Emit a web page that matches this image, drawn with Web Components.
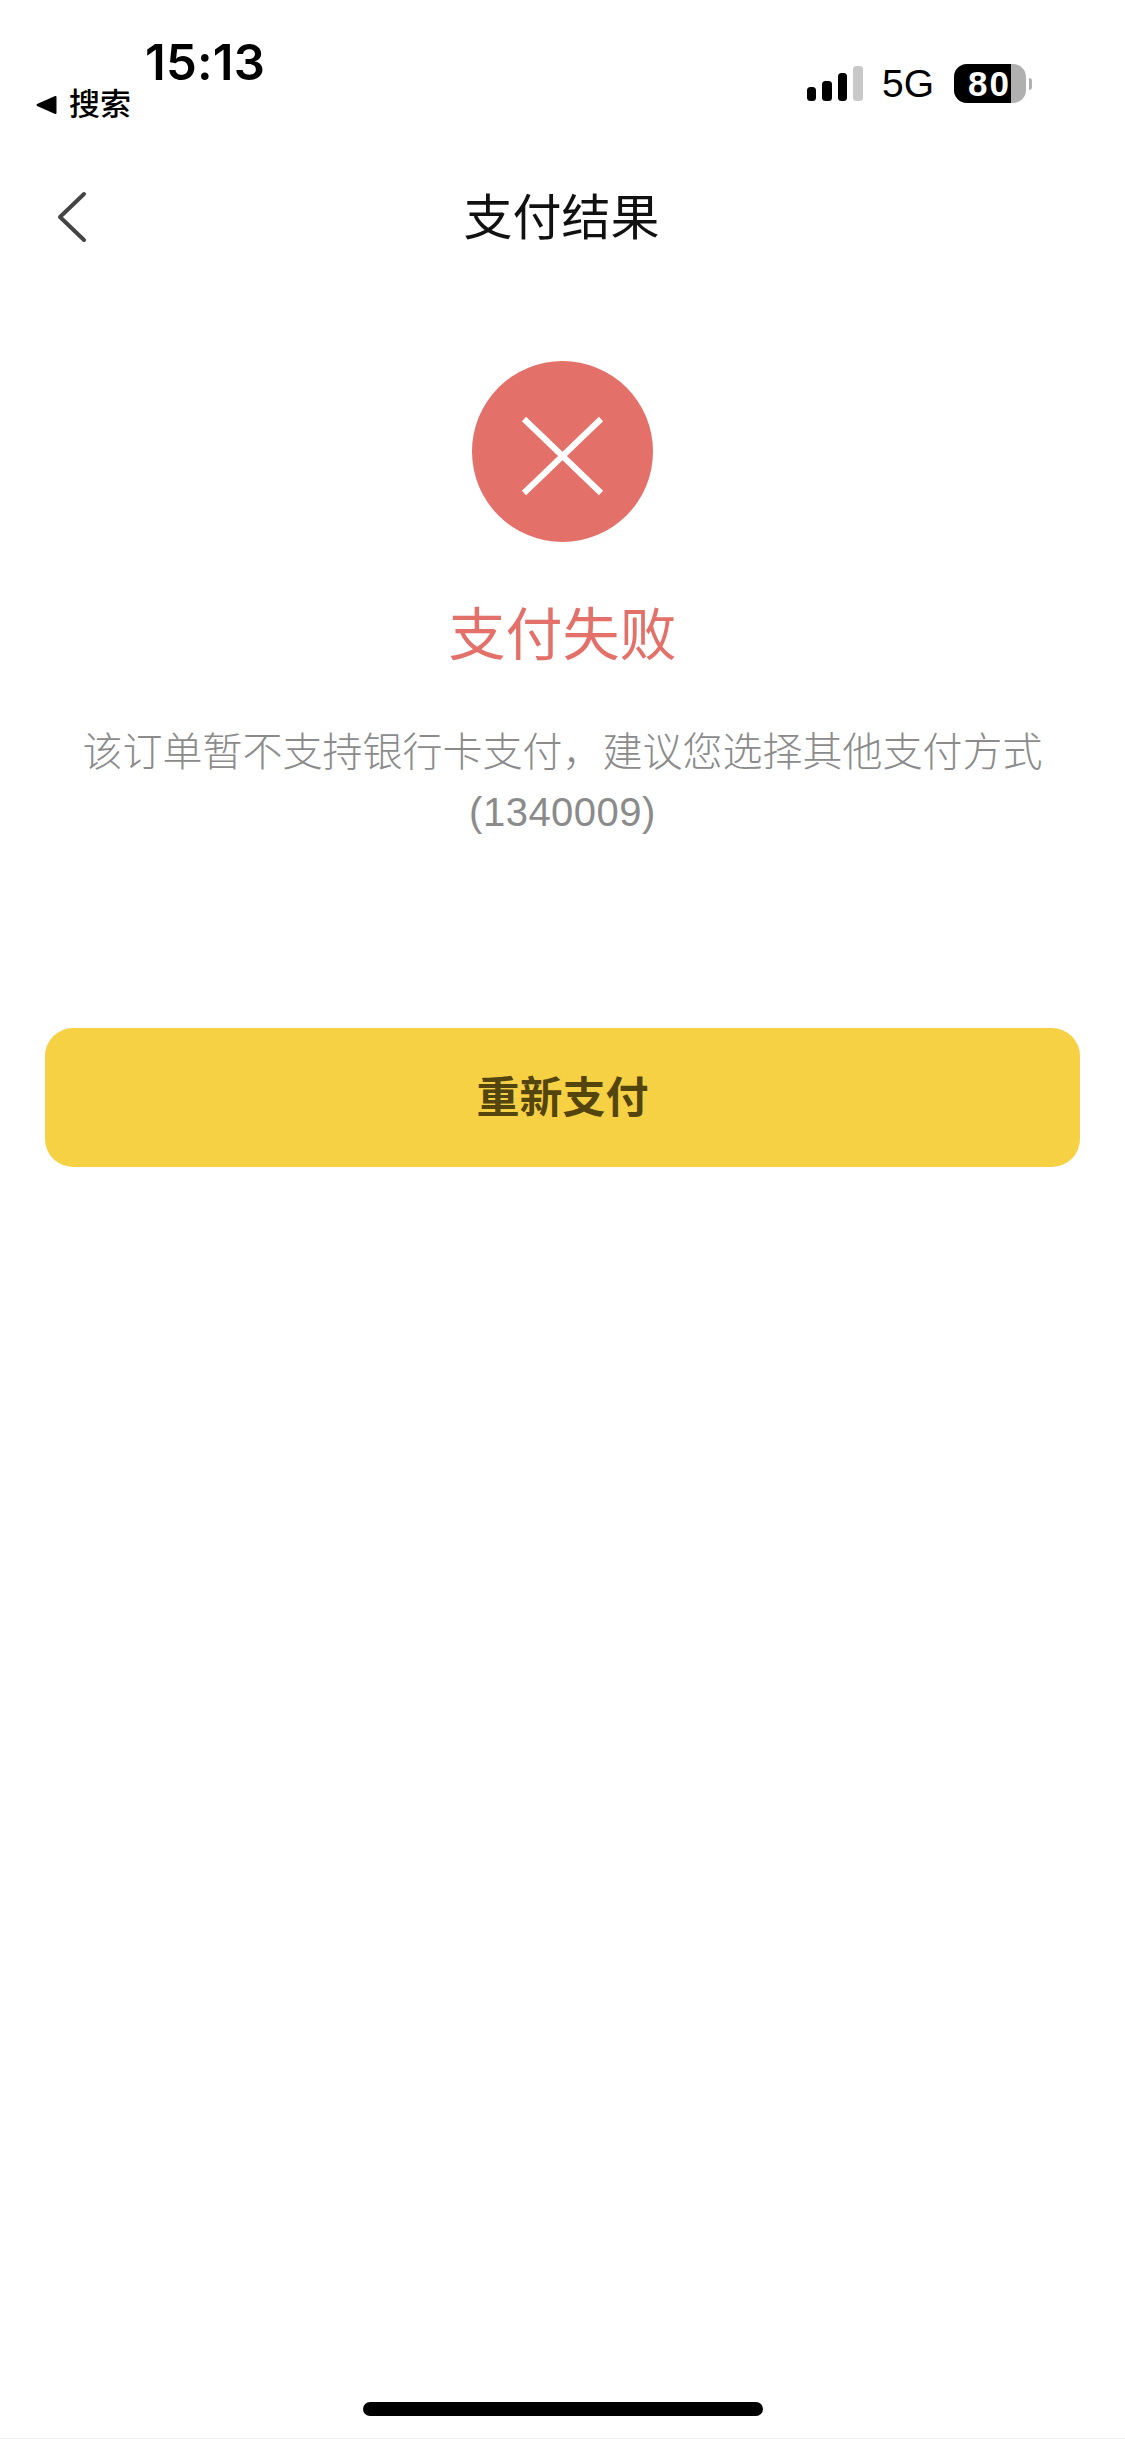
<!DOCTYPE html>
<html lang="zh">
<head>
<meta charset="utf-8">
<title>支付结果</title>
<style>
    html, body { margin: 0; padding: 0; background: #fff; }
    body {
        width: 1125px;
        height: 2439px;
        display: flex;
        flex-direction: column;
        overflow: hidden;
        font-family: "Liberation Sans", "Noto Sans CJK SC", sans-serif;
    }
</style>
</head>
<body>
<status-bar time="15:13" back="搜索" network="5G" battery="80"></status-bar>
<nav-bar>支付结果</nav-bar>
<pay-result heading="支付失败" code="(1340009)">该订单暂不支持银行卡支付，建议您选择其他支付方式</pay-result>
<action-button>重新支付</action-button>
<home-indicator></home-indicator>

<script>
class StatusBar extends HTMLElement {
    connectedCallback() {
        this.attachShadow({ mode: 'open' });
        this.shadowRoot.innerHTML = `
            <style>
                :host {
                    display: flex;
                    justify-content: space-between;
                    align-items: flex-start;
                    height: 138px;
                    padding: 38px 93px 0 36px;
                    box-sizing: border-box;
                    color: #000;
                }
                .left { display: flex; flex-direction: column; }
                .time {
                    margin-left: 109px;
                    font: 600 49px/49px Inter, "Liberation Sans", sans-serif;
                    letter-spacing: 0.2px;
                }
                .back {
                    display: flex;
                    align-items: center;
                    gap: 12px;
                    font-size: 31px;
                    line-height: 36px;
                    font-weight: 500;
                }
                .back svg { display: block; }
                .right { display: flex; align-items: flex-start; padding-top: 26px; }
                .signal { display: flex; align-items: flex-end; gap: 6px; height: 35px; padding-top: 2px; }
                .signal i { display: block; width: 9.5px; border-radius: 3.5px; background: #000; }
                .signal i:last-child { background: #c8c8c8; }
                .net {
                    margin-left: 19px;
                    font: 400 39px/39px "Liberation Sans", sans-serif;
                }
                .battery { display: flex; align-items: center; margin-left: 20px; }
                .cell {
                    display: flex;
                    width: 72px;
                    height: 39px;
                    border-radius: 13px;
                    overflow: hidden;
                    background: #b0b0b0;
                }
                .fill {
                    width: 57px;
                    background: #000;
                    color: #fff;
                    font: 700 35px/39px "Liberation Sans", sans-serif;
                    letter-spacing: 2px;
                    text-align: right;
                    box-sizing: border-box;
                }
                .nub {
                    width: 3px;
                    height: 12px;
                    margin-left: 3px;
                    border-radius: 0 3px 3px 0;
                    background: #b0b0b0;
                }
            </style>
            <div class="left">
                <div class="time">${this.getAttribute('time')}</div>
                <div class="back">
                    <svg width="21" height="20" viewBox="0 0 21 20"><path d="M1.5 10 19.5 2V18Z" fill="#000" stroke="#000" stroke-width="2" stroke-linejoin="round"/></svg>
                    <span>${this.getAttribute('back')}</span>
                </div>
            </div>
            <div class="right">
                <div class="signal">
                    <i style="height:14px"></i><i style="height:20px"></i><i style="height:28px"></i><i style="height:35px"></i>
                </div>
                <div class="net">${this.getAttribute('network')}</div>
                <div class="battery">
                    <div class="cell"><div class="fill">${this.getAttribute('battery')}</div></div>
                    <div class="nub"></div>
                </div>
            </div>
        `;
    }
}

class NavBar extends HTMLElement {
    connectedCallback() {
        this.attachShadow({ mode: 'open' });
        this.shadowRoot.innerHTML = `
            <style>
                :host {
                    display: grid;
                    grid-template-columns: 1fr auto 1fr;
                    align-items: center;
                    height: 156px;
                    color: #111;
                    font-size: 49px;
                }
                .back { padding-left: 56px; display: flex; }
                .title { padding: 0 2px 6px 0; }
            </style>
            <div class="back">
                <svg width="32" height="54" viewBox="0 0 32 54"><path d="M28 5 4 28 28 51" fill="none" stroke="#444" stroke-width="4" stroke-linecap="round" stroke-linejoin="round"/></svg>
            </div>
            <div class="title"><slot></slot></div>
            <div></div>
        `;
    }
}

class PayResult extends HTMLElement {
    connectedCallback() {
        this.attachShadow({ mode: 'open' });
        this.shadowRoot.innerHTML = `
            <style>
                :host {
                    display: flex;
                    flex-direction: column;
                    align-items: center;
                    padding-top: 67px;
                    text-align: center;
                }
                .mark { width: 181px; height: 181px; display: block; }
                h2 {
                    margin: 54px 0 0;
                    color: #e4706a;
                    font-size: 57px;
                    line-height: 78px;
                    font-weight: 400;
                }
                .desc {
                    margin-top: 48px;
                    color: #8b8b8b;
                    font-size: 40px;
                    line-height: 60px;
                    font-weight: 300;
                }
                .code { letter-spacing: 0.5px; }
            </style>
            <svg class="mark" viewBox="0 0 181 181">
                <circle cx="90.5" cy="90.5" r="90.5" fill="#e4706a"/>
                <path d="M52 58 129 132M129 58 52 132" fill="none" stroke="#fff" stroke-width="6"/>
            </svg>
            <h2>${this.getAttribute('heading')}</h2>
            <div class="desc"><slot></slot><br><span class="code">${this.getAttribute('code')}</span></div>
        `;
    }
}

class ActionButton extends HTMLElement {
    connectedCallback() {
        this.attachShadow({ mode: 'open' });
        this.shadowRoot.innerHTML = `
            <style>
                :host {
                    display: flex;
                    align-items: center;
                    justify-content: center;
                    height: 139px;
                    box-sizing: border-box;
                    padding-bottom: 8px;
                    margin: 186px 45px 0;
                    border-radius: 28px;
                    background: #f7d144;
                    color: #54440d;
                    font-size: 43px;
                    font-weight: 700;
                }
            </style>
            <slot></slot>
        `;
    }
}

class HomeIndicator extends HTMLElement {
    connectedCallback() {
        this.attachShadow({ mode: 'open' });
        this.shadowRoot.innerHTML = `
            <style>
                :host {
                    display: flex;
                    justify-content: center;
                    margin-top: auto;
                    padding-bottom: 22px;
                    border-bottom: 1px solid #f2f2f2;
                }
                div { width: 400px; height: 14px; border-radius: 7px; background: #000; }
            </style>
            <div></div>
        `;
    }
}

customElements.define('status-bar', StatusBar);
customElements.define('nav-bar', NavBar);
customElements.define('pay-result', PayResult);
customElements.define('action-button', ActionButton);
customElements.define('home-indicator', HomeIndicator);
</script>
</body>
</html>
